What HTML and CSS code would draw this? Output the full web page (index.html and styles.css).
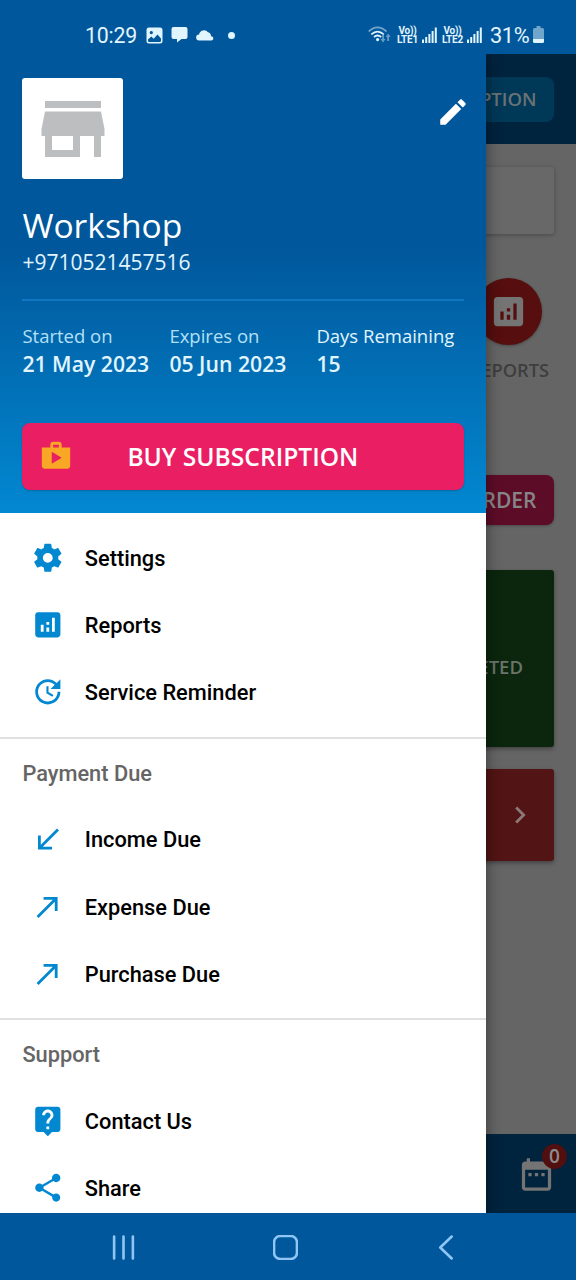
FILE: index.html
```html
<!DOCTYPE html>
<html lang="en">
<head>
<meta charset="utf-8">
<title>Workshop</title>
<link rel="stylesheet" href="styles.css">
</head>
<body>
<svg class="defs" width="0" height="0">
  <symbol id="analytics" viewBox="0 0 24 24"><path d="M19 3H5c-1.1 0-2 .9-2 2v14c0 1.1.9 2 2 2h14c1.1 0 2-.9 2-2V5c0-1.1-.9-2-2-2zM9 17H7v-5h2v5zm4 0h-2v-3h2v3zm0-5h-2v-2h2v2zm4 5h-2V7h2v10z"/></symbol>
  <symbol id="made" viewBox="0 0 24 24"><path d="M9 5v2h6.59L4 18.59 5.41 20 17 8.41V15h2V5z"/></symbol>
  <symbol id="signal" viewBox="0 0 15 17"><path d="M0 12.500h2V16H0zM3.200 10h2v6h-2zM6.400 7h2v9h-2zM9.600 4h2v12h-2zM12.800 .5h2V16h-2z"/></symbol>
</svg>
<div class="phone">
  <header class="status">
    <span class="clock">10:29</span>
    <svg class="st-photo" viewBox="0 0 17 17"><path fill-rule="evenodd" d="M3 .5h11A2.500 2.500 0 0 1 16.500 3v11a2.500 2.500 0 0 1-2.500 2.500H3A2.500 2.500 0 0 1 .5 14V3A2.500 2.500 0 0 1 3 .5zM2 13.500q0 1.500 1.300 1.500h10.400q1.300 0 1.300-1.500v-2l-3.500-4-3.800 4.200L5.300 9.500 2 12.500zM5.300 4a1.600 1.600 0 1 0 .01 0z"/></svg>
    <svg class="st-chat" viewBox="0 0 17 17"><path d="M2.500 1h12a2 2 0 0 1 2 2v8a2 2 0 0 1-2 2h-4L6 16.500V13H2.500a2 2 0 0 1-2-2V3a2 2 0 0 1 2-2z"/></svg>
    <svg class="st-cloud" viewBox="0 0 19 12"><path d="M3.200 11.500a3 3 0 0 1-.1-6A5 5 0 0 1 12 3.200a4 4 0 0 1 3 4 2.200 2.200 0 0 1 .8 4.300z"/></svg>
    <i class="st-dot"></i>
    <svg class="st-wifi" viewBox="0 0 24 17"><g fill="none" stroke="#e1f5fe" stroke-width="1.700"><path opacity=".5" d="M.7 5.500Q9.500-2.600 18.500 5.500"/><path d="M3.300 8.300q6.200-5.500 12.500 0M6 11q3.500-3 7.200 0"/></g><circle cx="9.600" cy="13.600" r="1.600"/><path opacity=".45" d="M14.200 9v4h-1.700l2.500 3.500 2.500-3.500H16V9zM19.200 15v-4h-1.500l2.500-3.500 2.500 3.500H21v4z"/></svg>
    <span class="lte"><b>Vo))</b><b>LTE1</b></span>
    <svg class="st-sig"><use href="#signal"/></svg>
    <span class="lte lte2"><b>Vo))</b><b>LTE2</b></span>
    <svg class="st-sig"><use href="#signal"/></svg>
    <span class="percent">31%</span>
    <svg class="st-batt" viewBox="0 0 11 17"><path opacity=".5" d="M3.500 0h4v2H9.500A1.500 1.500 0 0 1 11 3.500V12H0V3.500A1.500 1.500 0 0 1 1.500 2h2z"/><path d="M0 12.500h11v3a1.500 1.500 0 0 1-1.500 1.500h-8A1.500 1.500 0 0 1 0 15.500z"/></svg>
  </header>
  <main class="main">
    <aside class="drawer">
      <section class="profile">
        <div class="profile-top">
          <div class="avatar"><svg viewBox="0 0 24 24"><path d="M20 4H4v2h16V4zm1 10v-2l-1-5H4l-1 5v2h1v6h10v-6h4v6h2v-6h1zm-9 4H6v-4h6v4z"/></svg></div>
          <svg class="edit" viewBox="0 0 24 24"><path d="M3 17.250V21h3.750L17.810 9.940l-3.750-3.750L3 17.250zM20.710 7.040c.39-.39.39-1.020 0-1.410l-2.340-2.340c-.39-.39-1.020-.39-1.410 0l-1.830 1.830 3.750 3.750 1.830-1.830z"/></svg>
        </div>
        <h1 class="name">Workshop</h1>
        <p class="number">+9710521457516</p>
        <dl class="plan">
          <div><dt>Started on</dt><dd>21 May 2023</dd></div>
          <div><dt>Expires on</dt><dd>05 Jun 2023</dd></div>
          <div><dt class="strong">Days Remaining</dt><dd>15</dd></div>
        </dl>
        <button class="buy">
          <svg viewBox="0 0 24 24"><path d="M16 6V4c0-1.110-.89-2-2-2h-4c-1.110 0-2 .89-2 2v2H2v13c0 1.110.89 2 2 2h16c1.110 0 2-.89 2-2V6h-6zm-6-2h4v2h-4V4zM9 17.500V9l7 4.200z"/></svg>
          <span>BUY SUBSCRIPTION</span>
        </button>
      </section>
      <nav class="menu">
        <ul class="group">
          <li class="row"><svg viewBox="0 0 24 24"><path d="M19.430 12.980c.04-.32.07-.64.07-.98s-.03-.66-.07-.98l2.110-1.650c.19-.15.24-.42.12-.64l-2-3.460c-.12-.22-.39-.3-.61-.22l-2.490 1c-.52-.4-1.080-.73-1.690-.98l-.38-2.650C14.460 2.180 14.250 2 14 2h-4c-.25 0-.46.18-.49.42l-.38 2.650c-.61.25-1.170.59-1.690.98l-2.490-1c-.23-.09-.49 0-.61.22l-2 3.460c-.13.22-.07.49.12.64l2.110 1.650c-.04.32-.07.65-.07.98s.03.66.07.98l-2.110 1.650c-.19.15-.24.42-.12.64l2 3.460c.12.22.39.3.61.22l2.490-1c.52.4 1.080.73 1.690.98l.38 2.650c.03.24.24.42.49.42h4c.25 0 .46-.18.49-.42l.38-2.650c.61-.25 1.170-.59 1.690-.98l2.490 1c.23.09.49 0 .61-.22l2-3.460c.12-.22.07-.49-.12-.64l-2.110-1.650zM12 15.500c-1.930 0-3.500-1.570-3.500-3.500s1.570-3.500 3.500-3.500 3.500 1.570 3.500 3.500-1.570 3.500-3.500 3.500z"/></svg><span>Settings</span></li>
          <li class="row"><svg><use href="#analytics"/></svg><span>Reports</span></li>
          <li class="row"><svg viewBox="0 0 24 24"><path d="M11 8v5l4.250 2.520.77-1.280-3.520-2.090V8H11zm10 2V3l-2.640 2.640C16.740 4.010 14.490 3 12 3c-4.970 0-9 4.030-9 9s4.030 9 9 9 9-4.030 9-9h-2c0 3.860-3.140 7-7 7s-7-3.140-7-7 3.140-7 7-7c1.930 0 3.680.79 4.950 2.050L14 10h7z"/></svg><span>Service Reminder</span></li>
        </ul>
        <h2 class="label">Payment Due</h2>
        <ul class="group sub">
          <li class="row"><svg viewBox="0 0 24 24"><path d="M20 5.410L18.590 4 7 15.590V9H5v10h10v-2H8.410z"/></svg><span>Income Due</span></li>
          <li class="row"><svg><use href="#made"/></svg><span>Expense Due</span></li>
          <li class="row"><svg><use href="#made"/></svg><span>Purchase Due</span></li>
        </ul>
        <h2 class="label">Support</h2>
        <ul class="group sub">
          <li class="row"><svg viewBox="0 0 24 24"><path d="M19 2H5c-1.110 0-2 .9-2 2v14c0 1.100.89 2 2 2h4l3 3 3-3h4c1.100 0 2-.9 2-2V4c0-1.100-.9-2-2-2zm-6 16h-2v-2h2v2zm2.070-7.750l-.9.92C13.450 11.900 13 12.500 13 14h-2v-.5c0-1.100.45-2.100 1.170-2.830l1.240-1.260c.37-.36.59-.86.59-1.410 0-1.100-.9-2-2-2s-2 .9-2 2H8c0-2.210 1.790-4 4-4s4 1.790 4 4c0 .88-.36 1.680-.93 2.250z"/></svg><span>Contact Us</span></li>
          <li class="row"><svg viewBox="0 0 24 24"><path d="M18 16.080c-.76 0-1.440.3-1.960.77L8.910 12.700c.05-.23.09-.46.09-.7s-.04-.47-.09-.7l7.050-4.110c.54.5 1.250.81 2.040.81 1.660 0 3-1.340 3-3s-1.340-3-3-3-3 1.340-3 3c0 .24.04.47.09.7L8.040 9.810C7.500 9.310 6.790 9 6 9c-1.660 0-3 1.340-3 3s1.340 3 3 3c.79 0 1.500-.31 2.040-.81l7.120 4.160c-.05.21-.08.43-.08.65 0 1.610 1.310 2.920 2.920 2.920s2.920-1.310 2.920-2.920-1.310-2.920-2.920-2.920z"/></svg><span>Share</span></li>
        </ul>
      </nav>
    </aside>
    <section class="page">
      <div class="appbar"><div class="chip">PTION</div></div>
      <div class="search"></div>
      <div class="shortcut">
        <div class="disc"><svg><use href="#analytics"/></svg></div>
        <span>EPORTS</span>
      </div>
      <div class="order">RDER</div>
      <div class="tile done">ETED</div>
      <div class="tile due"><svg viewBox="0 0 24 24"><path d="M10 6L8.590 7.410 13.170 12l-4.580 4.590L10 18l6-6z"/></svg></div>
      <div class="tabs">
        <svg viewBox="0 0 24 24"><path d="M9 11H7v2h2v-2zm4 0h-2v2h2v-2zm4 0h-2v2h2v-2zm2-7h-1V2h-2v2H8V2H6v2H5c-1.110 0-1.990.9-1.990 2L3 20c0 1.100.89 2 2 2h14c1.100 0 2-.9 2-2V6c0-1.100-.9-2-2-2zm0 16H5V9h14v11z"/></svg>
        <span class="badge">0</span>
      </div>
    </section>
  </main>
  <footer class="sysnav">
    <svg viewBox="0 0 24 24"><path d="M3 1.500v21M12 1.500v21M21 1.500v21"/></svg>
    <svg viewBox="0 0 24 24"><rect x="1" y="1" width="22" height="22" rx="6"/></svg>
    <svg viewBox="0 0 24 24"><path d="M17 1.500L6 12l11 10.500"/></svg>
  </footer>
</div>
</body>
</html>
```
FILE: styles.css
```css
* { box-sizing: border-box; margin: 0; padding: 0; }
body { background: #01579b; font-family: "Open Sans", "Noto Sans", sans-serif; }
svg { display: block; fill: currentColor; flex: none; }
.defs { position: absolute; }
.phone { width: 576px; height: 1280px; display: flex; flex-direction: column; overflow: hidden; }

.status { height: 54px; flex: none; padding: 17px 0 0 85px; display: flex; align-items: flex-start; color: #e1f5fe; font-family: Roboto, sans-serif; }
.clock { width: 61px; font-size: 21.300px; line-height: 37px; letter-spacing: -.2px; }
.st-photo { width: 17px; height: 17px; margin-top: 10px; }
.st-chat { width: 17px; height: 17px; margin: 9px 0 0 8px; }
.st-cloud { width: 19px; height: 12px; margin: 12px 0 0 8px; }
.st-dot { width: 7px; height: 7px; border-radius: 50%; background: currentColor; margin: 15px 0 0 13px; }
.st-wifi { width: 24px; height: 17px; margin: 9px 0 0 133px; }
.lte { width: 23px; margin: 9px 0 0 4px; display: flex; flex-direction: column; align-items: center; }
.lte b { font-size: 10px; line-height: 9px; font-weight: 700; letter-spacing: -.2px; }
.st-sig { width: 15px; height: 17px; margin: 10px 0 0 3px; }
.percent { width: 39px; margin-left: 8px; font-size: 21.800px; line-height: 37px; letter-spacing: -.4px; }
.st-batt { width: 11px; height: 17px; margin: 9px 0 0 4px; }

.main { height: 1159px; flex: none; display: flex; overflow: hidden; background: #01579b; }
.drawer { width: 486px; flex: none; position: relative; z-index: 1; background: #fff; box-shadow: 0 0 14px rgba(0,0,0,.45); }
.profile { height: 459px; padding: 24.400px 22.400px 0; background: linear-gradient(#01579b 0, #01579b 42%, #0288d1 100%); color: #fff; }
.profile-top { display: flex; justify-content: space-between; height: 101px; }
.avatar { width: 101px; height: 101px; border-radius: 3px; background: #fff; color: #bdbec0; display: grid; place-items: center; }
.avatar svg { width: 84px; height: 84px; }
.edit { width: 34px; height: 34px; margin: 17px -6px 0 0; }
.name { margin-top: 23px; font-size: 33.600px; font-weight: 400; line-height: 46px; }
.number { font-size: 21px; line-height: 29px; color: #e1f5fe; }
.plan { margin-top: 22px; padding-top: 21.500px; border-top: 2px solid #1277c2; display: grid; grid-template-columns: repeat(3, 147px); }
.plan dt { font-size: 18.500px; line-height: 26px; color: #b3e0f7; white-space: nowrap; }
.plan dt.strong { color: #e1f5fe; }
.plan dd { font-size: 21.200px; line-height: 29px; font-weight: 600; color: #e1f5fe; white-space: nowrap; }
.buy { margin-top: 45px; width: 100%; height: 67px; border: 0; border-radius: 8px; background: #e91e63; color: #fff; display: flex; align-items: center; padding-left: 17px; font: 600 24.600px "Open Sans", sans-serif; box-shadow: 0 1px 2px rgba(0,0,0,.2); }
.buy svg { width: 34px; height: 34px; color: #f9a825; }
.buy span { margin-left: 54px; }

.menu { font-family: Roboto, sans-serif; font-weight: 500; }
.group { list-style: none; padding: 11.200px 0; }
.group.sub { padding-top: 0; }
.row { height: 67.200px; display: flex; align-items: center; padding-left: 31.200px; font-size: 21.800px; color: #000; }
.row svg { width: 33.600px; height: 33.600px; color: #0288d1; }
.row span { margin-left: 20px; padding-top: 1px; }
.label { height: 68.800px; border-top: 2px solid #e0e0e0; padding: 1px 0 0 22.400px; line-height: 67.200px; font-size: 21.800px; font-weight: 500; color: #656565; }

.page { flex: 1; min-width: 0; background: #656565; display: flex; flex-direction: column; align-items: flex-end; color: #868686; font-weight: 600; }
.appbar { width: 100%; height: 90px; flex: none; background: #00233e; display: flex; align-items: center; justify-content: flex-end; padding-right: 22.500px; }
.chip { width: 90px; height: 45px; flex: none; border-radius: 8px; background: #003857; text-align: right; padding-right: 17px; line-height: 44px; font-size: 18.500px; color: #6b7276; }
.search { width: 90px; height: 67px; flex: none; margin: 23px 22.500px 0 0; border-radius: 3px; background: #686868; box-shadow: 0 1px 4px rgba(0,0,0,.3); }
.shortcut { margin: 44px 27px 0 0; height: 108px; flex: none; display: flex; flex-direction: column; align-items: flex-end; color: #3e3e3e; font-size: 18.200px; }
.disc { width: 67px; height: 67px; margin-right: 7px; border-radius: 50%; background: #560e0e; color: #747474; display: grid; place-items: center; box-shadow: 0 1px 3px rgba(0,0,0,.3); }
.disc svg { width: 39px; height: 39px; }
.shortcut span { line-height: 26px; margin-top: 12px; }
.order { width: 90px; height: 50px; flex: none; margin: 89px 22.500px 0 0; border-radius: 8px; background: #5d0c28; text-align: right; padding-right: 17px; line-height: 51px; font-size: 21px; box-shadow: 0 1px 3px rgba(0,0,0,.3); }
.tile { width: 90px; flex: none; margin-right: 22.500px; border-radius: 3px; box-shadow: 0 2px 4px rgba(0,0,0,.35); }
.done { height: 177px; margin-top: 45px; background: #0b260d; text-align: right; padding-right: 30.500px; line-height: 194px; font-size: 18.500px; color: #6a746a; }
.due { height: 92px; margin-top: 22px; background: #521414; display: flex; align-items: center; justify-content: flex-end; padding-right: 17px; color: #8c7878; }
.due svg { width: 34px; height: 34px; }
.tabs { position: relative; width: 100%; height: 79px; flex: none; margin-top: auto; padding: 20.500px 0 0 31px; background: #00233e; color: #747474; }
.tabs svg { width: 39px; height: 39px; }
.badge { position: absolute; top: 10px; right: 9px; width: 25px; height: 25px; border-radius: 50%; background: #520f0f; color: #8c8c8c; font-size: 19px; line-height: 25px; text-align: center; }

.sysnav { flex: 1; display: grid; grid-template-columns: repeat(3, 161.500px); justify-content: center; align-items: center; justify-items: center; padding: 1px 6px 0 0; color: #90c6f5; }
.sysnav svg { width: 25px; height: 25px; fill: none; stroke: currentColor; stroke-width: 2.500; stroke-linecap: round; stroke-linejoin: round; }
```
